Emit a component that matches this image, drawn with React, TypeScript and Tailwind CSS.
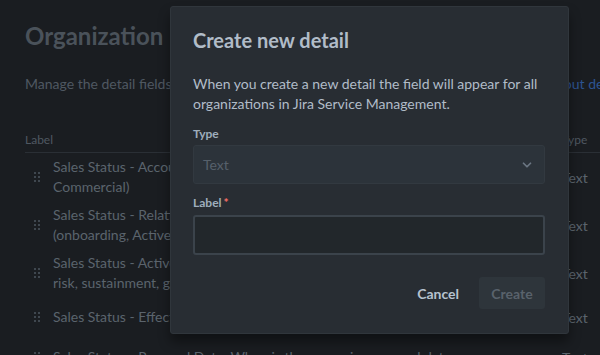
import { ChevronDown } from 'lucide-react';

const rows = [
  { lines: ['Sales Status - Account Type (Enterprise,', 'Commercial)'], type: 'Text' },
  { lines: ['Sales Status - Relationship Stage', '(onboarding, Active, Renewal)'], type: 'Text' },
  { lines: ['Sales Status - Active Status (healthy, at', 'risk, sustainment, growth)'], type: 'Text' },
  { lines: ['Sales Status - Effective Date'], type: 'Text' },
  { lines: ['Sales Status - Renewal Date: When is the upcoming renewal date'], type: 'Text' },
];

function DragHandle() {
  return (
    <svg width="6" height="10" viewBox="0 0 6 10" className="shrink-0">
      {[0, 4, 8].map((y) => (
        <g key={y}>
          <rect x="0" y={y} width="2" height="2" fill="#3f474f" />
          <rect x="4" y={y} width="2" height="2" fill="#3f474f" />
        </g>
      ))}
    </svg>
  );
}

export default function App() {
  return (
    <div
      className="relative w-[600px] h-[355px] overflow-hidden bg-[#1a1d21]"
      style={{ fontFamily: 'Lato, "Noto Sans", sans-serif' }}
    >
      {/* Page behind the modal */}
      <div className="pl-[25px] pt-[21px]">
        <h1 className="text-[24px] leading-[30px] font-bold text-[#4a525a] whitespace-nowrap">Organization&nbsp;&nbsp;&nbsp;details</h1>
        <p className="mt-[23px] text-[14px] leading-[20px] text-[#4f5861] whitespace-nowrap">
          Manage the detail fields that are shown for organizations in this project.{' '}
          <span className="ml-[9px] text-[#2d5491]">Learn more about details</span>
        </p>
        <div className="mt-[38px] flex items-center h-[16px] pb-[4px] box-content text-[12px] text-[#4f5861] border-b border-[#2a2f35]">
          <span className="flex-1">Label</span>
          <span className="w-[38px]">Type</span>
        </div>
        <div className="flex flex-col">
          {rows.map((r, i) => (
            <div key={i} className="flex items-center min-h-[40px] py-[4px]">
              <div className="flex-1 flex items-center gap-[13px] pl-[9px]">
                <DragHandle />
                <div className="text-[14px] leading-[20px] text-[#5b646d] whitespace-nowrap">
                  {r.lines.map((l) => (
                    <div key={l}>{l}</div>
                  ))}
                </div>
              </div>
              <span className="w-[38px] text-[14px] text-[#5b646d]">{r.type}</span>
            </div>
          ))}
        </div>
      </div>

      {/* Modal */}
      <div className="absolute left-[170px] top-[6px] w-[399px] h-[328px] rounded-[3px] bg-[#282d33] border border-[#30363c] shadow-[0_8px_12px_rgba(0,0,0,0.4)] pl-[22px] pr-[23px] pt-[21px] flex flex-col">
        <h2 className="text-[20px] leading-[24px] font-bold text-[#b1bcc8]">Create new detail</h2>
        <p className="mt-[22px] text-[14px] leading-[20px] text-[#b1bcc8]">
          When you create a new detail the field will appear for all organizations in Jira Service Management.
        </p>
        <label className="mt-[12px] text-[12px] leading-[16px] font-bold text-[#9fadbc]">Type</label>
        <div className="mt-[3px] h-[39px] rounded-[3px] bg-[#2c333a] border border-[#323940] flex items-center justify-between pl-[9px] pr-[10px]">
          <span className="text-[14px] text-[#56606a]">Text</span>
          <ChevronDown size={14} strokeWidth={3} className="text-[#6b7682]" />
        </div>
        <label className="mt-[11px] text-[12px] leading-[16px] font-bold text-[#9fadbc]">
          Label<span className="text-[#f87168] ml-[2px]">*</span>
        </label>
        <div className="mt-[4px] h-[40px] rounded-[3px] bg-[#22272b] border-2 border-[#3b434b]" />
        <div className="mt-[22px] flex items-center justify-end gap-[8px]">
          <button className="h-[32px] px-[12px] text-[14px] font-bold text-[#b6c2cf]">Cancel</button>
          <button className="h-[32px] w-[66px] rounded-[3px] bg-[#2e353b] text-[14px] font-bold text-[#59626b]">Create</button>
        </div>
      </div>
    </div>
  );
}
